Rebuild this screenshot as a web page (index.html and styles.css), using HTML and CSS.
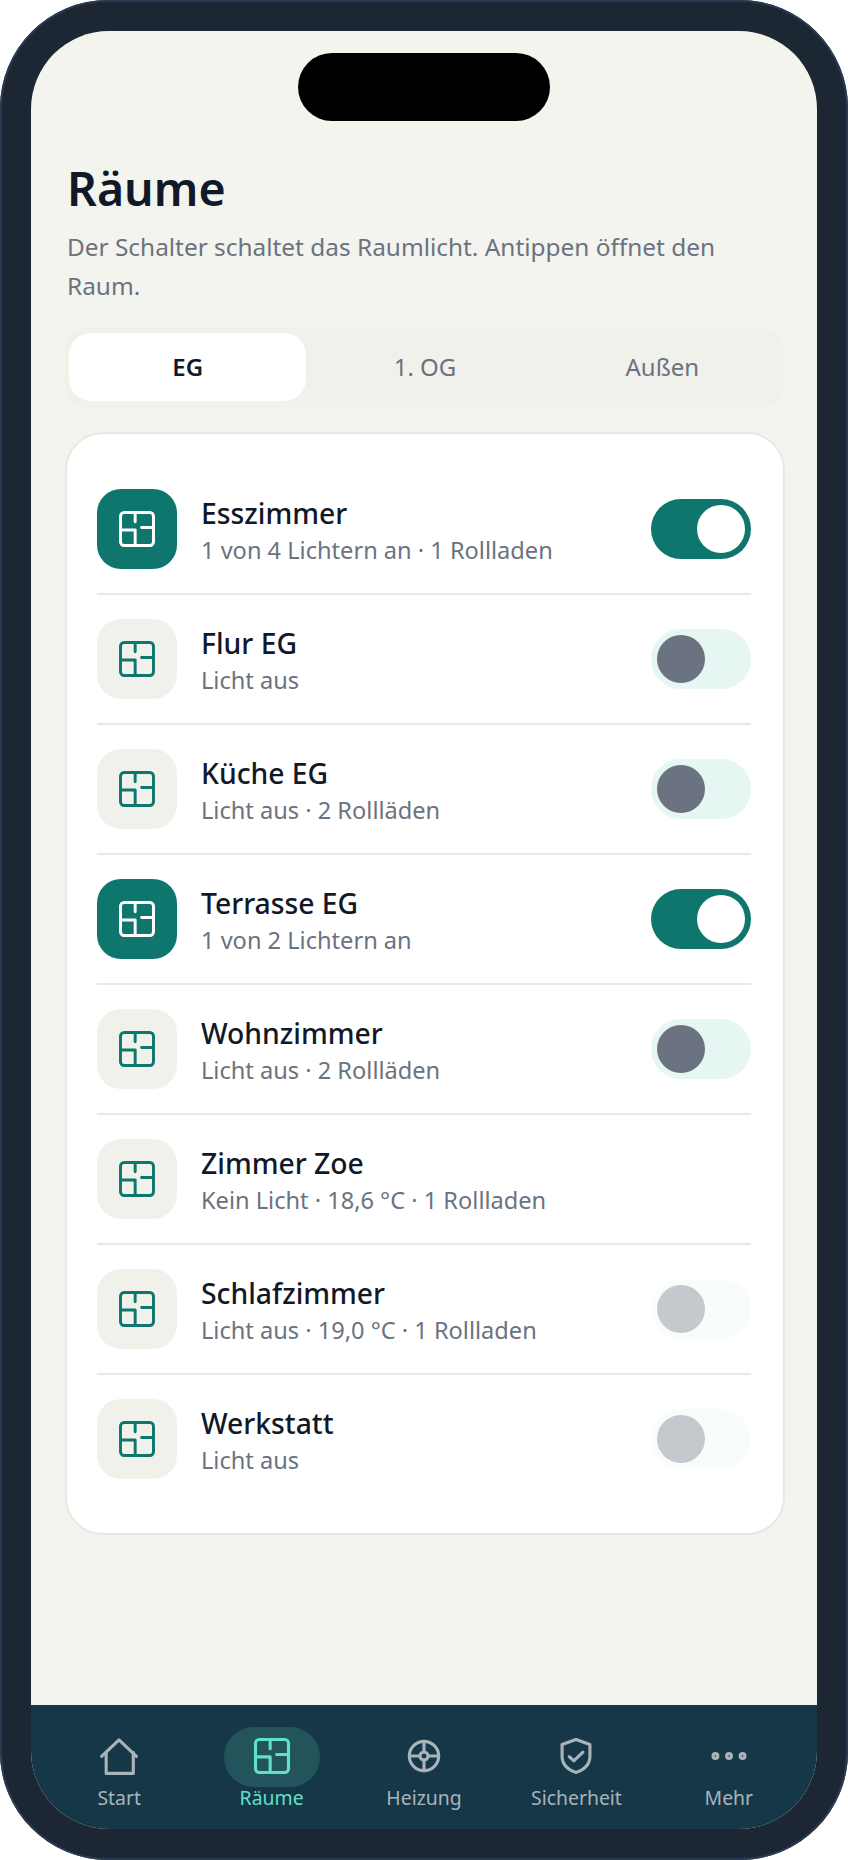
FILE: index.html
```html
<!DOCTYPE html>
<html lang="de">
<head>
  <meta charset="UTF-8">
  <title>Räume</title>
  <link rel="stylesheet" href="styles.css">
</head>
<body>
  <svg class="defs" width="0" height="0">
    <symbol id="plan" viewBox="0 0 24 24">
      <rect x="3" y="3" width="18" height="18" rx="2"/>
      <path d="M11 3v5M11 12.5V21M3 12.5h8M14.5 11.2H21"/>
    </symbol>
  </svg>
  <div class="phone">
    <div class="screen">
      <div class="island"></div>
      <main class="content">
        <h1>Räume</h1>
        <p class="intro">Der Schalter schaltet das Raumlicht. Antippen öffnet den Raum.</p>
        <div class="tabs">
          <div class="tab active">EG</div>
          <div class="tab">1. OG</div>
          <div class="tab">Außen</div>
        </div>
        <section class="card">
          <div class="room">
            <div class="room-icon on"><svg><use href="#plan"/></svg></div>
            <div class="room-text"><div class="room-name">Esszimmer</div><div class="room-sub">1 von 4 Lichtern an · 1 Rollladen</div></div>
            <div class="switch on"></div>
          </div>
          <div class="room">
            <div class="room-icon"><svg><use href="#plan"/></svg></div>
            <div class="room-text"><div class="room-name">Flur EG</div><div class="room-sub">Licht aus</div></div>
            <div class="switch"></div>
          </div>
          <div class="room">
            <div class="room-icon"><svg><use href="#plan"/></svg></div>
            <div class="room-text"><div class="room-name">Küche EG</div><div class="room-sub">Licht aus · 2 Rollläden</div></div>
            <div class="switch"></div>
          </div>
          <div class="room">
            <div class="room-icon on"><svg><use href="#plan"/></svg></div>
            <div class="room-text"><div class="room-name">Terrasse EG</div><div class="room-sub">1 von 2 Lichtern an</div></div>
            <div class="switch on"></div>
          </div>
          <div class="room">
            <div class="room-icon"><svg><use href="#plan"/></svg></div>
            <div class="room-text"><div class="room-name">Wohnzimmer</div><div class="room-sub">Licht aus · 2 Rollläden</div></div>
            <div class="switch"></div>
          </div>
          <div class="room">
            <div class="room-icon"><svg><use href="#plan"/></svg></div>
            <div class="room-text"><div class="room-name">Zimmer Zoe</div><div class="room-sub">Kein Licht · 18,6 °C · 1 Rollladen</div></div>
          </div>
          <div class="room">
            <div class="room-icon"><svg><use href="#plan"/></svg></div>
            <div class="room-text"><div class="room-name">Schlafzimmer</div><div class="room-sub">Licht aus · 19,0 °C · 1 Rollladen</div></div>
            <div class="switch disabled"></div>
          </div>
          <div class="room">
            <div class="room-icon"><svg><use href="#plan"/></svg></div>
            <div class="room-text"><div class="room-name">Werkstatt</div><div class="room-sub">Licht aus</div></div>
            <div class="switch disabled"></div>
          </div>
        </section>
      </main>
      <nav class="nav">
        <div class="nav-item">
          <div class="nav-icon">
            <svg viewBox="0 0 24 24"><path d="M2.500 12.200 12 3.200l9.500 9"/><path d="M5 10v11.500h14.800V10"/></svg>
          </div>
          <span>Start</span>
        </div>
        <div class="nav-item active">
          <div class="nav-icon"><svg><use href="#plan"/></svg></div>
          <span>Räume</span>
        </div>
        <div class="nav-item">
          <div class="nav-icon">
            <svg viewBox="0 0 24 24"><circle cx="12" cy="12" r="8"/><circle cx="12" cy="12" r="2.200"/><path d="M12 4v5.800M12 14.200V20M4 12h5.800M14.200 12H20"/></svg>
          </div>
          <span>Heizung</span>
        </div>
        <div class="nav-item">
          <div class="nav-icon">
            <svg viewBox="0 0 24 24"><path d="M12 3l7.600 2.700V12c0 4.600-3.200 7.500-7.600 9-4.400-1.500-7.600-4.400-7.600-9V5.700z"/><path d="M8.300 12.300l2.500 2.300 5-4.700"/></svg>
          </div>
          <span>Sicherheit</span>
        </div>
        <div class="nav-item">
          <div class="nav-icon">
            <svg viewBox="0 0 24 24"><circle cx="4.600" cy="12" r="1.300"/><circle cx="12" cy="12" r="1.300"/><circle cx="19.400" cy="12" r="1.300"/></svg>
          </div>
          <span>Mehr</span>
        </div>
      </nav>
    </div>
  </div>
</body>
</html>
```

FILE: styles.css
```css
html, body {
  margin: 0;
  padding: 0;
  background: #fff;
}
body {
  font-family: "Noto Sans", "Open Sans", sans-serif;
  width: 848px;
  height: 1860px;
  overflow: hidden;
}
.defs {
  display: block;
  height: 0;
}
.phone {
  box-sizing: border-box;
  width: 848px;
  height: 1860px;
  padding: 31px;
  background: #1c2733;
  border-radius: 108px;
  box-shadow: inset 0 0 0 2px #2a3a52;
}
.screen {
  position: relative;
  height: 100%;
  display: flex;
  flex-direction: column;
  background: #f4f4ee;
  border-radius: 78px;
  overflow: hidden;
}
.island {
  position: absolute;
  top: 22px;
  left: 267px;
  width: 252px;
  height: 68px;
  background: #000;
  border-radius: 34px;
}
.content {
  flex: 1;
  padding: 128px 32px 0 34px;
}
h1 {
  margin: 0;
  padding-left: 2px;
  font-size: 46.5px;
  line-height: 58px;
  font-weight: 600;
  color: #111827;
}
.intro {
  margin: 10px 0 0;
  padding-left: 2px;
  font-size: 24.4px;
  line-height: 39px;
  color: #6b7280;
}
.tabs {
  display: flex;
  margin-top: 23px;
  padding: 5px 4px 7px;
  background: #f1f1ec;
  border-radius: 22px;
}
.tab {
  flex: 1;
  height: 68px;
  line-height: 68px;
  text-align: center;
  font-size: 24px;
  color: #6b7280;
  border-radius: 22px;
}
.tab.active {
  background: #fff;
  color: #111827;
  font-weight: 600;
}
.card {
  margin-top: 24px;
  padding: 31px 32px 30px 30px;
  background: #fff;
  border: 2px solid #e8e8e4;
  border-radius: 38px;
}
.room {
  display: flex;
  align-items: center;
  height: 128px;
  border-bottom: 2px solid #e7e9e9;
}
.room:last-child {
  border-bottom: 0;
}
.room-icon {
  width: 80px;
  height: 80px;
  display: flex;
  align-items: center;
  justify-content: center;
  background: #f1f1ec;
  border-radius: 24px;
  color: #0f766e;
}
.room-icon.on {
  background: #0f766e;
  color: #fff;
}
.room-icon svg {
  width: 44px;
  height: 44px;
  fill: none;
  stroke: currentColor;
  stroke-width: 1.6;
  stroke-linecap: round;
}
.room-text {
  flex: 1;
  margin-left: 24px;
  padding-top: 2px;
}
.room-name {
  font-size: 28.3px;
  line-height: 36px;
  font-weight: 500;
  color: #111827;
}
.room-sub {
  margin-top: 3px;
  font-size: 23.6px;
  line-height: 32px;
  color: #6b7280;
}
.switch {
  position: relative;
  width: 100px;
  height: 60px;
  background: #e6f6f3;
  border-radius: 30px;
}
.switch::after {
  content: "";
  position: absolute;
  top: 6px;
  left: 6px;
  width: 48px;
  height: 48px;
  background: #6b7280;
  border-radius: 50%;
}
.switch.on {
  background: #0f766e;
}
.switch.on::after {
  left: 46px;
  background: #fff;
}
.switch.disabled {
  background: #f8fdfc;
}
.switch.disabled::after {
  background: #c4c9ce;
}
.nav {
  height: 124px;
  display: flex;
  padding: 0 12px;
  background: #163748;
}
.nav-item {
  flex: 1;
  display: flex;
  flex-direction: column;
  align-items: center;
  padding-top: 22px;
  font-size: 19.4px;
  line-height: 28px;
  color: #a8b3ba;
}
.nav-item span {
  margin-top: -3px;
}
.nav-icon {
  width: 96px;
  height: 60px;
  display: flex;
  align-items: center;
  justify-content: center;
  border-radius: 30px;
}
.nav-icon svg {
  width: 44px;
  height: 44px;
  margin-top: -2px;
  fill: none;
  stroke: currentColor;
  stroke-width: 1.7;
  stroke-linecap: round;
  stroke-linejoin: round;
}
.nav-item.active {
  color: #5fe0c8;
}
.nav-item.active .nav-icon {
  background: #23545c;
}
```
